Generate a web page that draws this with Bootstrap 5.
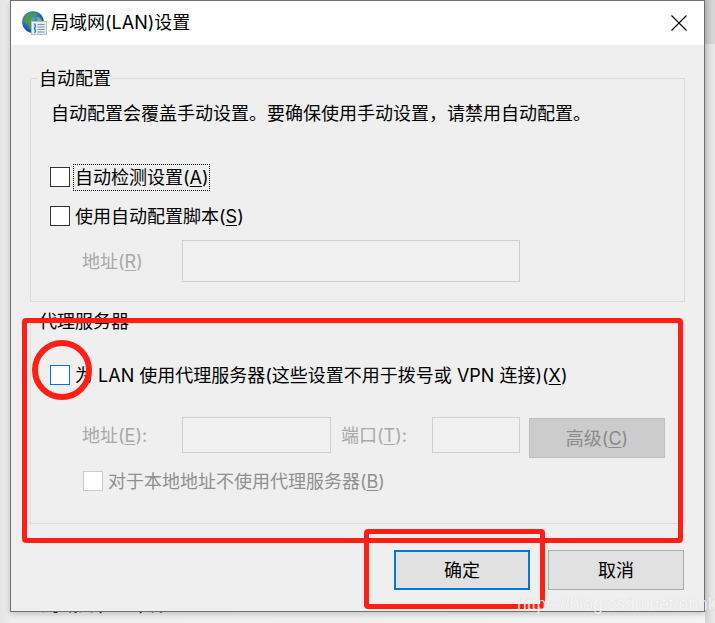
<!DOCTYPE html>
<html lang="zh">
<head>
<meta charset="utf-8">
<title>局域网(LAN)设置</title>
<link rel="stylesheet" href="https://cdn.jsdelivr.net/npm/bootstrap@5.3.0/dist/css/bootstrap.min.css">
<style>
html,body{height:623px;overflow:hidden}
body{background:linear-gradient(90deg,#e4e4e4,#eeeeee 11px,#f4f4f4);font-family:Inter,"Noto Sans CJK SC",sans-serif;font-size:18px;line-height:24px;color:#000;position:relative}
.desk-top{position:absolute;left:705px;top:0;width:10px;height:44px;background:linear-gradient(90deg,#bdbdbd,#dcdcdc)}
.desk-side{position:absolute;left:705px;top:44px;width:10px;height:579px;background:linear-gradient(90deg,#d4d4d4,#ececec)}
.behind-text{position:absolute;left:42px;top:593px;color:#222}
.win{position:relative;margin-left:10px;width:695px;height:612px;background:#efefef;border:1px solid #6f6f6f;box-shadow:0 2px 6px rgba(0,0,0,.2)}
.tbar{height:44px;background:#fff;padding-left:11px;padding-right:17px}
.tbar svg{display:block;flex:none}
.ico-globe{margin-right:3px}
.win-body{padding:33px 19px 0 19px}
.grp{margin:0;padding:0;border:1px solid #dcdcdc;position:relative}
.grp-a{height:224px;margin-bottom:21px;padding:23px 19px 0}
.grp-b{height:201px;padding:41px 19px 0}
.grp-t{position:absolute;left:7px;top:-12px;background:#efefef;padding:0 1px;white-space:nowrap}
.grp-b .grp-t{background:transparent;top:-14px}
.desc-line{margin-left:1px;white-space:nowrap}
.box{width:20px;height:20px;background:#fff;border:1px solid #333;flex:none}
.box-blue{border-color:#0078d7}
.box-off{border-color:#ccc}
.focus-lab{outline:1px dotted #000;padding:0 0 0 1px;margin-left:-1px;line-height:25px}
.ck-row{height:20px;gap:5px;line-height:20px;white-space:nowrap}
.nudge{padding-top:2px}
.off{color:#8f8f8f}
.lbl-addr,.lbl-port{color:#a8a8a8}
.fld{background:#f0f0f0;border:1px solid #cfcfcf;flex:none}
.lbl-addr{width:62px;margin-left:32px;white-space:nowrap;flex:none}
.lbl-tall{line-height:38px}
.w-addr1{width:338px;margin-left:38px;height:42px}
.w-addr2{width:149px;margin-left:38px;height:36px}
.lbl-port{margin-left:10px;width:79px;white-space:nowrap;flex:none;line-height:38px}
.w-port{width:88px;height:36px;margin-left:12px}
.btn.adv-btn,.btn.adv-btn:disabled{width:136px;height:40px;margin-left:9px;margin-top:1px;background:#ccc;border:1px solid #bfbfbf;border-radius:0;color:#8a8a8a;font-size:18px;line-height:24px;padding:2px 0 0;opacity:1;flex:none}
.act{width:136px;height:40px;background:#e1e1e1;border:1px solid #adadad;border-radius:0;color:#000;font-size:18px;line-height:24px;padding:2px 0 0}
.act:hover{background:#e1e1e1;color:#000;border-color:#adadad}
.act-main{border:2px solid #0078d7;margin-right:18px}
.act-main:hover{border-color:#0078d7}
.acts{position:absolute;left:383px;top:549px}
.ink{position:absolute;border:5px solid #ff2015;pointer-events:none;border-radius:4px}
.ink-a{left:22px;top:318px;width:661px;height:225px}
.ink-b{left:364px;top:529px;width:181px;height:80px}
.ink-c{left:32px;top:340px;width:60px;height:60px;border-width:6px;border-radius:50%}
.wm{position:absolute;left:517px;top:591px;font-family:"Liberation Sans",sans-serif;font-size:17.500px;line-height:26px;color:rgba(255,255,255,.8);text-shadow:0 0 1px rgba(130,130,130,.3);white-space:nowrap}
u{text-underline-offset:2px}
</style>
</head>
<body>
<div class="desk-top"></div>
<div class="desk-side"></div>
<div class="behind-text">局域网(LAN)设置</div>

<div class="win">
  <div class="tbar d-flex align-items-center">
    <svg width="26" height="24" viewBox="0 0 26 24" class="ico-globe" aria-hidden="true">
      <defs>
        <radialGradient id="gl" cx=".4" cy=".35" r=".7"><stop offset="0" stop-color="#5aa8e8"/><stop offset=".7" stop-color="#1c5fae"/><stop offset="1" stop-color="#123f7c"/></radialGradient>
      </defs>
      <circle cx="11" cy="11" r="10.800" fill="url(#gl)"/>
      <path d="M4 5c3-3 7-4 10-3 2 1 0 3-2 3-1 2-3 2-3 4 0 2 3 2 3 4s-2 4-3 6c-2-1-2-4-3-6-1-1-3-1-4-3 0-2 1-3 2-5z" fill="#4f9a3c"/>
      <path d="M15 6c2 0 4 1 5 4l-3 1c-1-1-3-2-2-5z" fill="#7cb55a"/>
      <rect x="9.500" y="10.500" width="15" height="13" fill="#e8edf2" stroke="#b6bcc4"/>
      <path d="M15.500 13.500h7M15.500 16h7M15.500 18.500h7M15.500 21h7" stroke="#7f8fa3" stroke-width="1.100"/>
      <path d="M12.500 12.500l1 2.500-1 2.500 1 2.500-1 2" stroke="#2e8bd8" stroke-width="1.600" fill="none"/>
    </svg>
    <span class="flex-grow-1">局域网(LAN)设置</span>
    <svg width="16" height="16" viewBox="0 0 16 16" aria-label="关闭"><path d="M.5.500l15 15M15.500.500l-15 15" stroke="#000" stroke-width="1.100"/></svg>
  </div>
  <div class="win-body">
    <div class="grp grp-a">
      <div class="grp-t">自动配置</div>
      <div class="desc-line">自动配置会覆盖手动设置。要确保使用手动设置，请禁用自动配置。</div>
      <div class="d-flex align-items-center ck-row" style="margin-top:41px">
        <span class="box"></span><span class="focus-lab">自动检测设置(<u>A</u>)</span>
      </div>
      <div class="d-flex align-items-center ck-row" style="margin-top:19px">
        <span class="box"></span><span class="nudge">使用自动配置脚本(<u>S</u>)</span>
      </div>
      <div class="d-flex align-items-center off" style="margin-top:14px">
        <span class="lbl-addr nudge">地址(<u>R</u>)</span><span class="fld w-addr1"></span>
      </div>
    </div>
    <div class="grp grp-b">
      <div class="grp-t">代理服务器</div>
      <div class="d-flex align-items-center ck-row">
        <span class="box box-blue"></span><span class="nudge">为 LAN 使用代理服务器(这些设置不用于拨号或 VPN 连接)(<u>X</u>)</span>
      </div>
      <div class="d-flex align-items-start off" style="margin-top:32px">
        <span class="lbl-addr lbl-tall">地址(<u>E</u>):</span><span class="fld w-addr2"></span>
        <span class="lbl-port">端口(<u>T</u>):</span><span class="fld w-port"></span>
        <button type="button" class="btn adv-btn" disabled>高级(<u>C</u>)</button>
      </div>
      <div class="d-flex align-items-center ck-row off" style="margin-top:13px;margin-left:33px">
        <span class="box box-off"></span><span class="nudge">对于本地地址不使用代理服务器(<u>B</u>)</span>
      </div>
    </div>
  </div>
  <div class="acts d-flex">
    <button type="button" class="btn act act-main">确定</button>
    <button type="button" class="btn act">取消</button>
  </div>
</div>

<div class="ink ink-a"></div>
<div class="ink ink-b"></div>
<div class="ink ink-c"></div>
<div class="wm">https://blog.csdn.net/ohnk</div>
</body>
</html>
